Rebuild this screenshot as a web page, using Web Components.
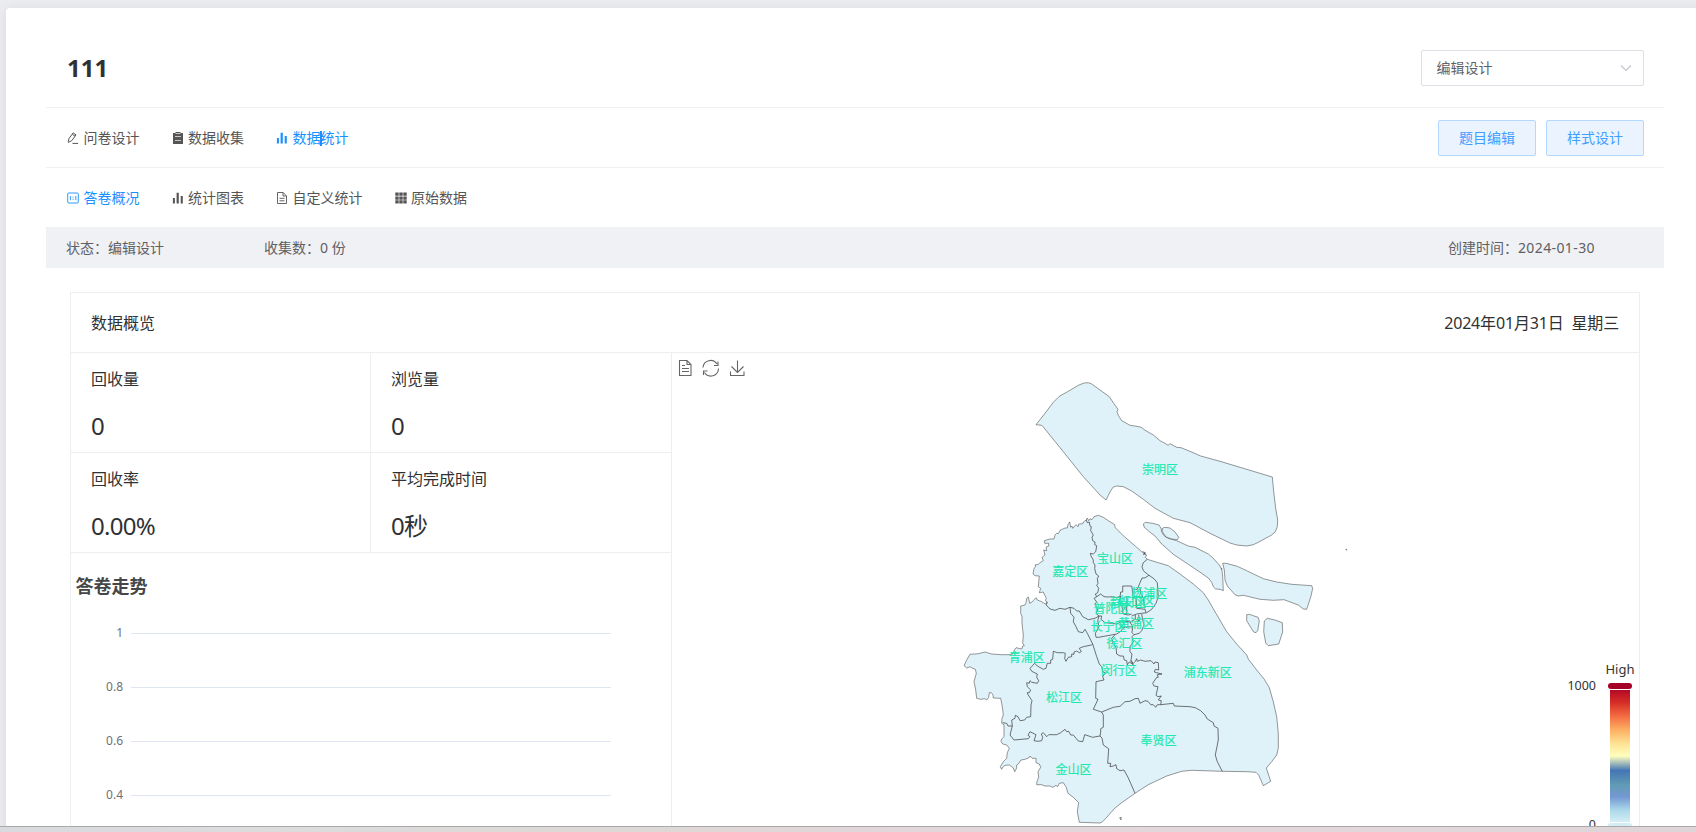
<!DOCTYPE html>
<html lang="zh-CN">
<head>
<meta charset="utf-8">
<title>111</title>
<style>
html,body{margin:0;height:100%;overflow:hidden;background:#ebecef}
body{font-family:"Noto Sans","Noto Sans CJK SC",sans-serif;color:#606266}
</style>
</head>
<body>
<survey-page></survey-page>
<script>
const define=(name,html,ready)=>{
  const t=document.createElement('template');
  t.innerHTML=html;
  customElements.define(name,class extends HTMLElement{
    constructor(){super();this.attachShadow({mode:'open'}).append(t.content.cloneNode(true));}
    connectedCallback(){if(ready)ready.call(this,this.shadowRoot);}
  });
};

/* ---------- icons ---------- */
const ICONS={
  edit:'<path d="M1.3 9.6 2 6.5 6.2.9 9 2.9 4.8 8.6 1.3 10.4ZM5.3 2.2 8 4.2M5.5 11.4h5.6" fill="none" stroke="currentColor"/>',
  clip:'<path d="M1 1h2.5V0h5v1H11v11H1Z" fill="currentColor"/><path d="M3 4.5h6M3 8.5h6M3.5 1.500h5" stroke="#fff" stroke-width=".9" opacity=".75"/>',
  bars:'<path d="M.9 6h2v5.500h-2ZM4.600.8h2.200v10.700H4.600ZM8.700 4h2.100v7.500H8.700Z" fill="currentColor"/>',
  overview:'<rect x=".7" y="1" width="10.6" height="10" rx="1" fill="none" stroke="currentColor" stroke-width=".9"/><path d="M3.400 4v4.200M8.800 4v4.200M6.100 4.600v1M6.100 6.800v1" stroke="currentColor" stroke-width=".9"/>',
  doc:'<path d="M1.500.5h5.700L10.500 4v7.500h-9ZM7 .7V4h3.300M3.500 6.300h5M3.500 8.800h5" fill="none" stroke="currentColor" stroke-width=".9"/>',
  grid:'<path d="M.3.5h3.400v3.300H.3ZM4.300.5h3.400v3.300H4.300ZM8.300.5h3.400v3.300H8.300ZM.3 4.400h3.400v3.300H.3ZM4.300 4.400h3.400v3.300H4.300ZM8.300 4.400h3.400v3.300H8.300ZM.3 8.300h3.400v3.300H.3ZM4.300 8.300h3.400v3.300H4.300ZM8.300 8.300h3.400v3.300H8.300Z" fill="currentColor"/>'
};
define('tab-item',`<style>
:host{display:flex;align-items:center;gap:4.5px;font-size:14px;line-height:20px;color:#555;white-space:nowrap}
:host([active]){color:#1890ff}
svg{width:12px;height:12px;display:block}
</style><svg viewBox="0 0 12 12"></svg><span><slot></slot></span>`,function(r){
  r.querySelector('svg').innerHTML=ICONS[this.getAttribute('icon')];
});

define('tab-row',`<style>
:host{display:flex;align-items:center;justify-content:space-between;height:59px;padding:0 20px 0 21px;border-bottom:1px solid #f0f0f0}
:host([plain]){border-bottom:0}
.tabs{display:flex;gap:32px}
.actions{display:flex;gap:10px;margin-top:1px}
</style><div class="tabs"><slot></slot></div><div class="actions"><slot name="actions"></slot></div>`);

define('text-caret',`<style>
:host{position:absolute;width:2px;height:15px;margin:3px 0 0 -1px;background:#1890ff}
</style>`);

define('plain-button',`<style>
:host{display:flex;align-items:center;justify-content:center;box-sizing:border-box;width:98px;height:36px;border:1px solid #b3d8ff;border-radius:2px;background:#ebf3ff;color:#409eff;font-size:14px;line-height:20px}
</style><slot></slot>`);

define('select-box',`<style>
:host{display:flex;align-items:center;justify-content:space-between;box-sizing:border-box;width:223px;height:36px;padding:0 11px 0 14.5px;border:1px solid #dcdfe6;border-radius:2px;background:#fff;color:#606266;font-size:14px;line-height:20px}
svg{width:12px;height:12px}
</style><slot></slot><svg viewBox="0 0 12 12"><path d="M1 3.5l5 5 5-5" fill="none" stroke="#c0c4cc" stroke-width="1.1"/></svg>`);

define('status-bar',`<style>
:host{display:flex;align-items:center;height:41px;padding:0 69px 0 20px;background:#f0f1f5;font-size:14px;line-height:20px;color:#5f6064}
.state{width:198px}
.created{margin-left:auto}
.created b{font-weight:400;letter-spacing:.4px}
</style><span class="state">状态：编辑设计</span><span>收集数：0 份</span><span class="created">创建时间：<b>2024-01-30</b></span>`);

define('stat-cell',`<style>
:host{display:block;box-sizing:border-box;height:100px;padding:14px 0 0 20px;border-bottom:1px solid #eee;color:#303133}
:host([split]){border-right:1px solid #eee}
.l{font-size:16px;line-height:24px}
.v{font-size:24px;line-height:32px;margin-top:19px;letter-spacing:-.7px}
</style><div class="l"><slot></slot></div><div class="v"><slot name="value"></slot></div>`);

/* ---------- trend chart ---------- */
define('trend-chart',`<style>
:host{display:block;height:273px;overflow:hidden}
svg{display:block}
</style><svg width="600" height="273" viewBox="71 553 600 273">
<text x="75.500" y="592.5" font-size="18" font-weight="700" fill="#464646">答卷走势</text>
<g id="rows" font-size="12" fill="#6e7079" text-anchor="end"></g></svg>`,function(r){
  r.getElementById('rows').innerHTML=['1','0.8','0.6','0.4'].map((v,i)=>{
    const y=633.5+54*i;
    return `<path d="M131 ${y}H611" stroke="#e0e6f1"/><text x="123" y="${y+3.5}">${v}</text>`;
  }).join('');
});

/* ---------- district map ---------- */
/* Points are stored in thirds of a pixel, per map sheet; each sheet has its own origin. */
const SHEET={N:[1020,370],W:[950,500],E:[1130,510],SW:[950,640],SE:[1100,640]};
const line=(...parts)=>{
  const pts=[];
  for(const [sheet,s] of parts){
    const [ox,oy]=SHEET[sheet];
    for(const p of s.trim().split(/\s+/)){
      const [x,y]=p.split(',').map(Number);
      pts.push((ox+x/3).toFixed(1)+' '+(oy+y/3).toFixed(1));
    }
  }
  return 'M'+pts.join('L');
};
const AREAS=[
  [['N','48,164 75,130 100,97 118,79 145,64 175,46 192,39 205,38 214,41 240,60 268,80 280,98 294,118 291,125 295,136 305,152 318,159 330,166 350,169 364,172 374,180 400,195 420,212 435,220 444,226 450,221 470,232 483,233 510,244 542,258 600,274 757,321 761,365 767,415 773,450 772,470 766,485 755,495 715,517 700,524 680,528 650,525 630,519 570,490 510,458 460,445 405,415 370,388 335,363 310,350 290,348 280,351 272,362 258,390 240,375 190,320 130,245 70,171 65,166']],
  [['W','409,60 412,54 416,62 420,56 426,59 432,50 445,46 460,52 475,62 494,74 496,83 520,107 560,142 575,155 590,165 586,172 592,178'],['E','85,158 115,167 150,192 190,222 220,248 235,270 255,305 290,365 320,402 350,435 355,447 380,480'],['SE','493,118 508,143 520,185 530,230 535,280 535,325 530,345 515,365 499,384 512,424 490,437 476,405 468,397 440,395 367,394 275,391 245,394 200,408 145,434 105,460 65,488 45,504 20,532 8,545 0,549'],['SW','388,547 382,515 386,488 370,472 354,460 348,440 340,428 328,430 323,440 318,436 308,442 300,438 285,438 275,434 260,434 261,424 266,412 264,395 272,382 268,372 258,368 258,355 246,355 240,348 236,354 225,358 213,360 205,372 200,375 200,384 194,395 190,384 185,380 178,375 165,376 157,383 155,388 151,380 160,365 170,355 172,338 178,325 170,315 158,312 153,304 155,297 162,290 162,254 155,250 156,235 160,225 157,200 152,175 130,174 129,165 124,158 118,158 116,172 110,180 104,176 92,178 80,175 77,150 72,125 79,100 76,88 66,84 60,80 50,84 42,77 50,60 60,43 85,41 105,36 125,42 155,44 180,44'],['W','190,461 193,450 198,443 215,447 218,438 223,437 218,430 220,405 216,370 216,350 212,340 212,318 225,315 228,308 230,295 235,291 239,310 246,306 258,293 262,300 275,305 286,312 292,306 286,302 289,295 284,285 280,276 268,278 272,265 265,260 268,228 255,227 249,222 252,205 257,200 255,195 265,193 270,188 280,182 276,172 285,165 281,150 290,152 288,142 296,138 296,130 284,130 283,122 300,117 312,117 315,105 320,100 325,101 330,91 345,84 352,84 354,74 359,66 362,82 366,78 368,85 378,74 384,80 386,72 398,71 400,66']],
  [['N','370,462 376,457 398,460 417,465 423,475 425,485 432,497 445,505 470,512 505,528 525,532 565,552 580,565 598,585 605,598'],['E','275,175 278,200 280,242 270,238 257,237 250,230 245,217 235,204 215,190 130,133 95,102 75,78 60,67 43,52']],
  [['E','97,55 105,52 120,54 135,66 146,82 142,89 125,87 108,81 97,65']],
  [['E','278,160 287,160 300,163 322,169 350,182 400,206 440,216 485,223 545,227 548,235 543,258 530,298 520,297 505,285 462,269 430,271 390,268 340,256 325,258 315,254 292,228 285,210 283,180']],
  [['E','350,314 358,313 370,317 384,322 388,333 383,362 378,368 371,366 362,352 350,332']],
  [['E','403,333 412,325 435,330 457,338 458,366 446,402 415,407 407,399 401,365']],
  [['E','647,118 650,118 650,121']],
  [['SW','509,533 514,532 513,540']]
];
const BORDERS=[
  ['W','409,60 412,68 418,66 420,78 424,80 422,92 430,105 426,112 428,122 435,126 434,134 440,137 437,155 430,162 421,160 423,168 430,180 430,188 435,195 434,206 438,222 446,228 442,235 444,250 440,256 446,265 443,278 436,282 440,290'],
  ['W','292,306 288,315 294,320 300,327 315,331 330,325 345,328 360,322 372,325 380,333 388,333 398,350 415,359 435,355 447,348 438,340 444,330 434,312 440,306 432,295 440,290'],
  ['W','440,290 452,282 462,290 475,291 490,290 500,293 510,290 512,276 518,276 518,258 545,258 547,268 562,268 570,248 576,234 584,234 597,226 592,222 580,212 576,200 580,188 592,178'],
  ['W','597,226 612,236 622,248 625,290 618,310 605,328 590,338 575,340 560,342 545,348'],
  ['W','547,268 548,288 558,295 560,325 585,328 588,338'],
  ['W','570,264 572,280 580,295 584,325'],
  ['W','512,288 508,306 516,320 520,342 535,345 545,342'],
  ['W','530,290 530,342'],
  ['W','556,345 556,358 568,362 566,344'],
  ['W','575,342 578,360 582,375 575,392 568,400 552,404 546,398 548,380 540,366 556,358'],
  ['W','447,348 455,348 453,358 465,368 485,370 500,372 520,362 540,366'],
  ['W','360,322 362,340 372,352 370,365 378,380 385,395 398,398 405,388 412,400 428,432'],
  ['W','447,348 443,362 447,380 436,400 438,412 446,412 500,402 512,394 522,382 548,380'],
  ['W','495,404 485,415 490,432 498,440 500,462 510,468 520,468 523,480 530,482 532,494 538,486 550,494'],
  ['W','552,404 546,410 550,425 540,440 540,455 546,462 543,480 550,494'],
  ['SW','428,12 424,15 400,20 388,25 394,35 388,38 380,33 372,36 372,43 365,42 365,50 355,52 348,64 344,56 346,40 340,38 322,38 310,34 308,58 302,60 302,70 292,70 288,85 280,88 262,78 254,70 240,85 245,94 262,102 260,112 266,122 262,130 245,127 240,122 238,130 230,128 232,140 242,150 238,158 232,158 234,164 246,182 243,195 242,230 230,232 224,240 210,242 204,230 196,226 195,235 185,240 187,258 174,258 170,250 158,248'],
  ['SW','187,258 180,285 192,300 235,296 240,290 234,286 240,275 258,284 252,302 264,304 275,302 278,292 274,282 280,278 290,290 296,284 320,284 332,278 345,268 350,275 356,274 362,285 370,285 385,303 398,305 404,284 428,292 438,290 450,288'],
  ['SW','428,12 440,50 448,72 455,80 458,95 466,98 458,110 462,120 438,125 437,175 444,178 430,208 455,216 460,225 460,262 452,266 452,276 450,288'],
  ['SW','450,288 456,294 460,315 476,326 473,370 482,370 480,380 490,378 498,374 500,386 510,392 522,390 534,412 542,430 555,460'],
  ['SW','455,216 490,202 510,199 525,185 540,184 555,176 565,175 570,190 585,182 594,184 602,194 610,194 617,202 622,194 632,194 670,190 673,198 720,200'],
  ['SE','270,200 286,203 302,212 315,225 322,237 340,248 342,258 354,265 355,300 346,345 352,365 367,394'],
  ['SW','632,194 634,182 625,180 634,168 624,170 618,166 624,140 612,138 608,130 620,112 625,112 622,104 636,102 620,98 613,96 616,88 626,90 625,68 615,66 612,72 603,62 585,64 572,60 562,64 560,56 556,64 550,70 540,62'],
  ['E','38,125 46,128 40,133 48,132']
];
const LABELS=[['崇明区',1160,469.7],['宝山区',1115,558.7],['嘉定区',1070.3,571.7],['杨浦区',1149.3,593.7],['虹口区',1136.7,601.7],['静安区',1128,602],['普陀区',1111.5,608.7],['长宁区',1108.5,626.7],['黄浦区',1136,623.7],['徐汇区',1124.5,643.7],['青浦区',1026.7,657.3],['闵行区',1118.7,670.7],['松江区',1064,697.7],['浦东新区',1207.7,672.7],['奉贤区',1158.5,740.7],['金山区',1073.5,769.7]];

define('district-map',`<style>
:host{display:block;height:473px;overflow:hidden}
svg{display:block}
</style><svg width="967" height="473" viewBox="672 353 967 473">
<defs><linearGradient id="heat" x1="0" y1="0" x2="0" y2="1">
<stop offset="0" stop-color="#b30a26"/><stop offset=".1" stop-color="#d73027"/><stop offset=".2" stop-color="#f46d43"/><stop offset=".3" stop-color="#fdae61"/><stop offset=".4" stop-color="#fee090"/><stop offset=".5" stop-color="#ffffbf"/><stop offset=".61" stop-color="#4575b4"/><stop offset=".72" stop-color="#619bb4"/><stop offset=".81" stop-color="#7498d4"/><stop offset=".91" stop-color="#abd9e9"/><stop offset="1" stop-color="#d4edf5"/>
</linearGradient></defs>
<g fill="none" stroke="#666" stroke-width="1.1">
<path d="M679.500 360.500h7.500l4 4v11h-11.500ZM687 360.500v4h4M682 365.500h3M682 368.500h7M682 371.500h7"/>
<path d="M703 367.500a7.600 7.600 0 0 1 14-3.500M718.500 368.500a7.600 7.600 0 0 1-14 4M718 361.500v4h-4M703.500 375v-4h4"/>
<path d="M737.500 360.500v12M731.500 366.500l6 6 6-6M730.500 371.500v4h13.500v-4"/>
</g>
<g id="areas" fill="#dff2f9" stroke="#333" stroke-opacity=".5" stroke-linejoin="round"></g>
<g id="borders" fill="none" stroke="#333" stroke-opacity=".68" stroke-linejoin="round"></g>
<g id="labels" font-size="12" fill="#1ee8b0" stroke="#1ee8b0" stroke-width=".2" text-anchor="middle"></g>
<g font-size="13" fill="#333"><text x="1620" y="674" text-anchor="middle">High</text><text x="1596" y="690" font-size="12.500" text-anchor="end">1000</text><text x="1596" y="829" font-size="12.500" text-anchor="end">0</text></g>
<rect x="1610" y="690" width="20" height="132" fill="url(#heat)"/>
<rect x="1608" y="683" width="24" height="6" rx="3" fill="#a50026"/>
<rect x="1608" y="823" width="24" height="6" rx="3" fill="#d4edf5"/>
</svg>`,function(r){
  r.getElementById('areas').innerHTML=AREAS.map(a=>`<path d="${line(...a)}Z"/>`).join('');
  r.getElementById('borders').innerHTML=BORDERS.map(b=>`<path d="${line(b)}"/>`).join('');
  r.getElementById('labels').innerHTML=LABELS.map(([t,x,y])=>`<text x="${x}" y="${y+4.5}">${t}</text>`).join('');
});

define('data-panel',`<style>
:host{display:block;box-sizing:border-box;width:1570px;height:540px;margin:24px 0 0 24px;border:1px solid #eee}
header{display:flex;align-items:center;justify-content:space-between;height:59px;padding:0 20px;border-bottom:1px solid #eee;font-size:16px;line-height:24px;color:#303133;white-space:pre}
.date{letter-spacing:-.17px}
.body{display:grid;grid-template-columns:601px 1fr}
.left{border-right:1px solid #eee}
.stats{display:grid;grid-template-columns:300px 300px}
</style>
<header><span>数据概览</span><span class="date">2024年01月31日  星期三</span></header>
<div class="body">
<div class="left"><div class="stats">
<stat-cell split>回收量<span slot="value">0</span></stat-cell>
<stat-cell>浏览量<span slot="value">0</span></stat-cell>
<stat-cell split>回收率<span slot="value">0.00%</span></stat-cell>
<stat-cell>平均完成时间<span slot="value">0秒</span></stat-cell>
</div><trend-chart></trend-chart></div>
<district-map></district-map>
</div>`);

define('survey-page',`<style>
:host{display:flex;flex-direction:column;height:832px;overflow:hidden}
.view{height:826px;box-sizing:border-box;overflow:hidden;padding:8px 0 0 6px;background:#ebecef}
.card{width:1740px;height:900px;box-sizing:border-box;padding-left:40px;background:#fff;border-radius:4px;box-shadow:0 2px 12px rgba(0,0,0,.08)}
.inner{width:1618px}
.head{display:flex;align-items:center;justify-content:space-between;box-sizing:border-box;height:100px;padding:20px 20px 0 21px;border-bottom:1px solid #f0f0f0}
h1{margin:1px 0 0;font-size:24px;line-height:32px;font-weight:700;color:#303133}
.edge{height:6px;box-sizing:border-box;border-top:1px solid #aaa;background:linear-gradient(90deg,#d9dade 0,#dcdcdd 300px,#ddd8d5 600px,#e2d6db 950px,#e2d8dc 1350px,#ddd5d8 1696px)}
</style>
<div class="view"><div class="card"><div class="inner">
<div class="head"><h1>111</h1><select-box>编辑设计</select-box></div>
<tab-row><tab-item icon="edit">问卷设计</tab-item><tab-item icon="clip">数据收集</tab-item><tab-item icon="bars" active>数据<text-caret></text-caret>统计</tab-item>
<plain-button slot="actions">题目编辑</plain-button><plain-button slot="actions">样式设计</plain-button></tab-row>
<tab-row plain><tab-item icon="overview" active>答卷概况</tab-item><tab-item icon="bars">统计图表</tab-item><tab-item icon="doc">自定义统计</tab-item><tab-item icon="grid">原始数据</tab-item></tab-row>
<status-bar></status-bar>
<data-panel></data-panel>
</div></div></div>
<div class="edge"></div>`);
</script>
</body>
</html>
